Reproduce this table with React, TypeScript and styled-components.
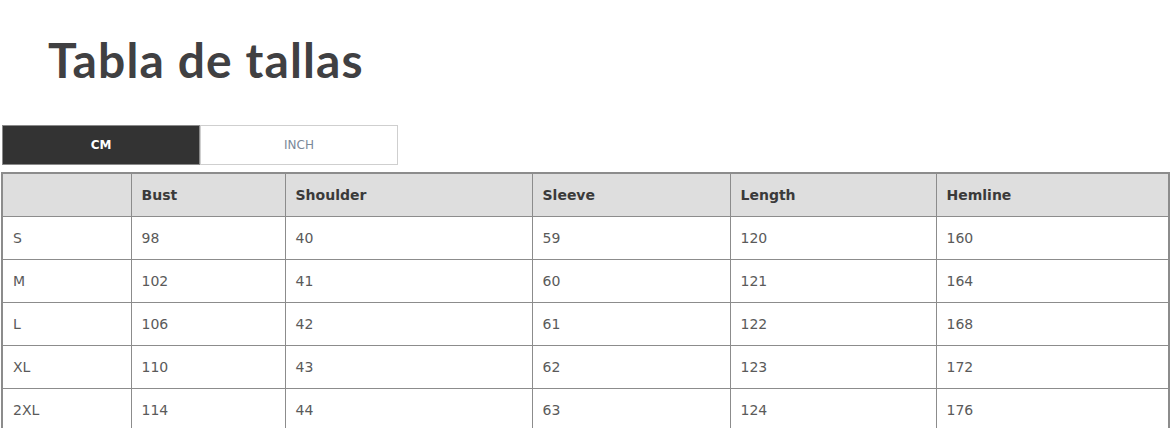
import React, { useState } from 'react'
import styled, { createGlobalStyle } from 'styled-components'

const GlobalStyle = createGlobalStyle`
  html, body {
    margin: 0;
    padding: 0;
    background: #fff;
  }
  body {
    width: 1170px;
    height: 428px;
    overflow: hidden;
  }
`

const Page = styled.div`
  width: 1170px;
  padding: 31px 2px 0 1px;
  box-sizing: border-box;
`

const Title = styled.h1`
  font-family: 'Lato', 'Open Sans', sans-serif;
  font-weight: 700;
  font-size: 48px;
  line-height: 58px;
  color: #404042;
  margin: 0 0 36px 47px;
  letter-spacing: 1.1px;
`

const Tabs = styled.div`
  display: flex;
  width: 396px;
  height: 40px;
  margin: 0 0 7px 1px;
`

const Tab = styled.button<{ active: boolean }>`
  flex: 1;
  height: 100%;
  border: 1px solid ${(p) => (p.active ? '#8a8a8a' : '#cfcfcf')};
  background: ${(p) => (p.active ? '#333333' : '#ffffff')};
  color: ${(p) => (p.active ? '#ffffff' : '#7a8899')};
  font-family: 'DejaVu Sans', Verdana, sans-serif;
  font-size: 12px;
  font-weight: ${(p) => (p.active ? 700 : 400)};
  padding: 0;
  cursor: pointer;
`

const Table = styled.table`
  width: 1167px;
  box-sizing: border-box;
  border-collapse: collapse;
  border: 2px solid #8c8c8c;
  font-family: 'DejaVu Sans', Verdana, sans-serif;
  font-size: 14px;
  table-layout: fixed;
`

const HeadCell = styled.th`
  background: #dedede;
  color: #3a3a3a;
  font-weight: 700;
  text-align: left;
  height: 42px;
  padding: 0 0 0 10px;
  border: 1px solid #8c8c8c;
`

const Cell = styled.td`
  color: #5a5a5a;
  height: 42px;
  padding: 0 0 0 10px;
  border: 1px solid #8c8c8c;
  background: #fff;
`

const headers = ['', 'Bust', 'Shoulder', 'Sleeve', 'Length', 'Hemline']
const widths = [129, 154, 247, 198, 206, 233]

const cmRows = [
  ['S', '98', '40', '59', '120', '160'],
  ['M', '102', '41', '60', '121', '164'],
  ['L', '106', '42', '61', '122', '168'],
  ['XL', '110', '43', '62', '123', '172'],
  ['2XL', '114', '44', '63', '124', '176'],
]

const toInch = (v: string) => (Number(v) / 2.54).toFixed(1)

export default function App() {
  const [unit, setUnit] = useState<'cm' | 'inch'>('cm')

  const rows =
    unit === 'cm' ? cmRows : cmRows.map((r) => [r[0], ...r.slice(1).map(toInch)])

  return (
    <Page>
      <GlobalStyle />
      <Title>Tabla de tallas</Title>
      <Tabs>
        <Tab active={unit === 'cm'} onClick={() => setUnit('cm')}>
          CM
        </Tab>
        <Tab active={unit === 'inch'} onClick={() => setUnit('inch')}>
          INCH
        </Tab>
      </Tabs>
      <Table>
        <colgroup>
          {widths.map((w, i) => (
            <col key={i} style={{ width: w }} />
          ))}
        </colgroup>
        <thead>
          <tr>
            {headers.map((h, i) => (
              <HeadCell key={i}>{h}</HeadCell>
            ))}
          </tr>
        </thead>
        <tbody>
          {rows.map((row) => (
            <tr key={row[0]}>
              {row.map((v, i) => (
                <Cell key={i}>{v}</Cell>
              ))}
            </tr>
          ))}
        </tbody>
      </Table>
    </Page>
  )
}
